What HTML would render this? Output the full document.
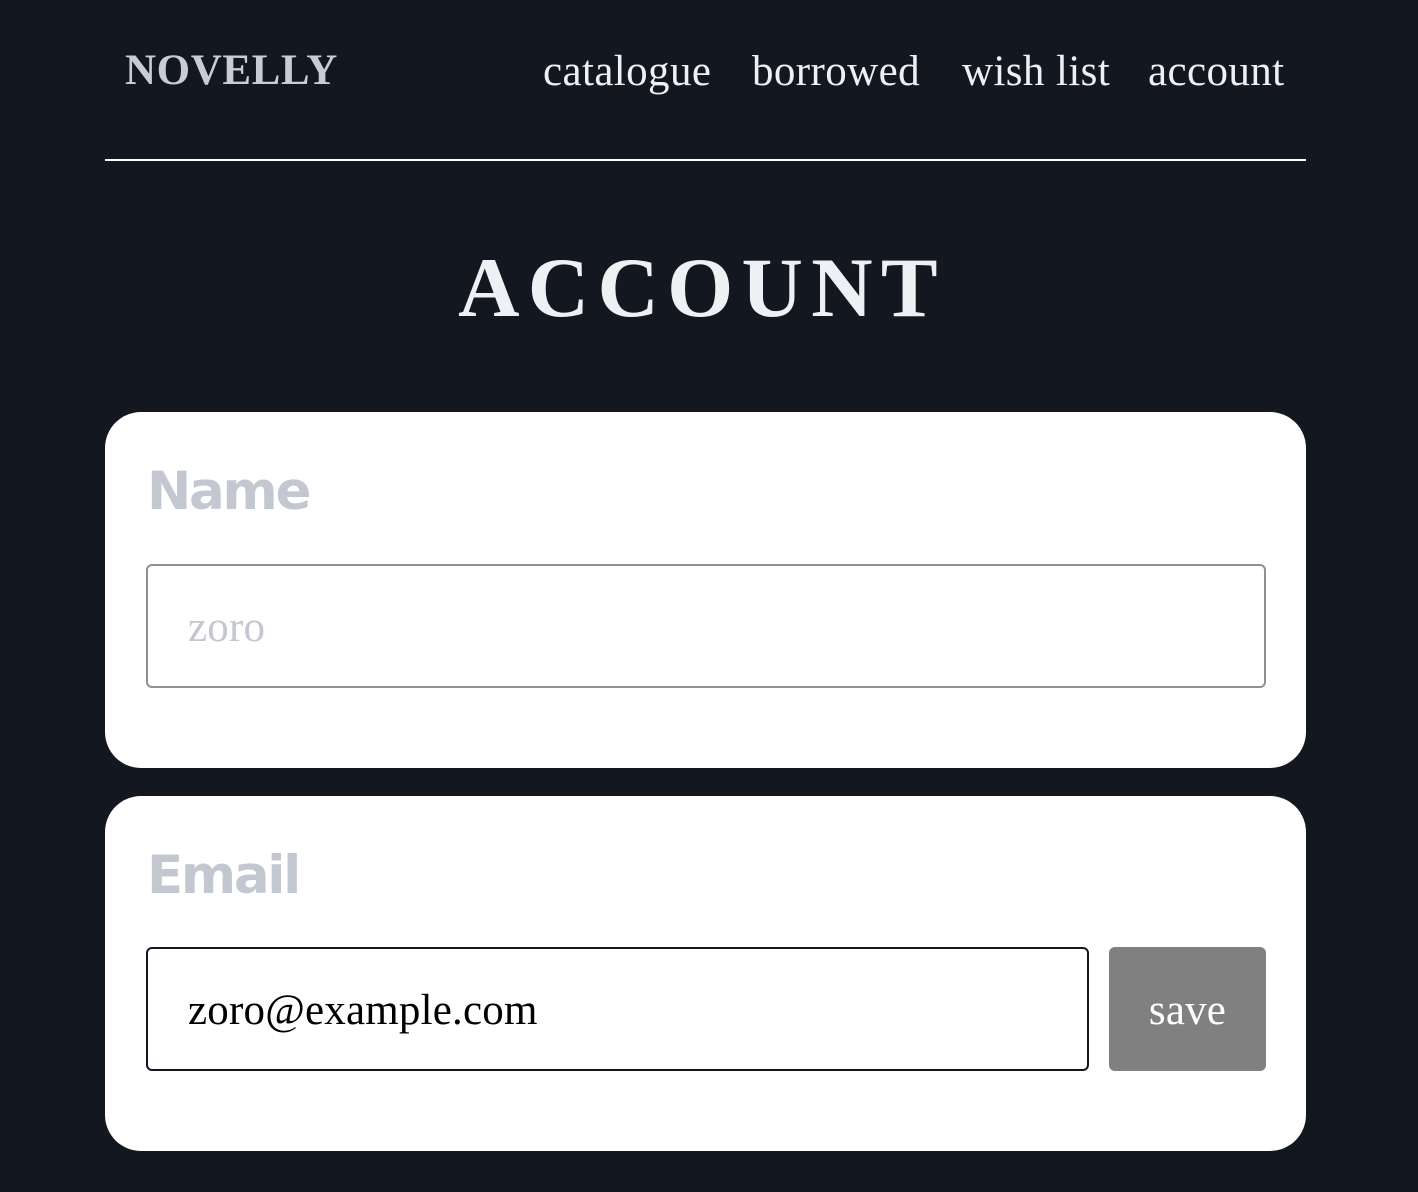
<!DOCTYPE html>
<html><head><style>
body{margin:0;width:1418px;height:1192px;background:#131720;font-family:"Liberation Serif",serif;position:relative;overflow:hidden}
.abs{position:absolute;white-space:nowrap}
.logo{left:125px;top:46px;font-size:43px;font-weight:bold;color:#c9ccd4;line-height:50px;letter-spacing:0.6px}
.nav{top:46px;font-size:43px;color:#eef0f3;line-height:52px;letter-spacing:0.4px}
.line{left:105px;top:159px;width:1201px;height:2px;background:#fff}
.h1{left:0;width:1404px;text-align:center;top:238px;font-size:85px;font-weight:bold;letter-spacing:8.3px;color:#eef0f3;line-height:100px}
.card{position:absolute;left:105px;width:1201px;height:356px;background:#fff;border-radius:36px}
.lbl{position:absolute;left:42px;font-family:"DejaVu Sans","Liberation Sans",sans-serif;font-weight:bold;font-size:53px;color:#c3c7d0;letter-spacing:-2.3px}
.inp{position:absolute;left:41px;top:152px;height:124px;border-radius:6px;box-sizing:border-box;font-size:43px;line-height:124px;padding-left:40px;letter-spacing:0.2px}
.btn{position:absolute;left:1004px;top:151px;width:157px;height:124px;background:#808080;border-radius:6px;color:#fff;font-size:43px;text-align:center;line-height:128px;letter-spacing:0.2px}
</style></head><body>
<div class="abs logo">NOVELLY</div>
<div class="abs nav" style="left:543px">catalogue</div>
<div class="abs nav" style="left:752px">borrowed</div>
<div class="abs nav" style="left:962px">wish list</div>
<div class="abs nav" style="left:1148px">account</div>
<div class="abs line"></div>
<div class="abs h1">ACCOUNT</div>
<div class="card" style="top:412px">
<div class="lbl" style="top:49px">Name</div>
<div class="inp" style="width:1120px;border:2px solid #8e9097;color:#c3c7d0">zoro</div>
</div>
<div class="card" style="top:796px;height:355px">
<div class="lbl" style="top:49px">Email</div>
<div class="inp" style="width:943px;top:151px;border:2px solid #131720;color:#000">zoro@example.com</div>
<div class="btn">save</div>
</div>
</body></html>
